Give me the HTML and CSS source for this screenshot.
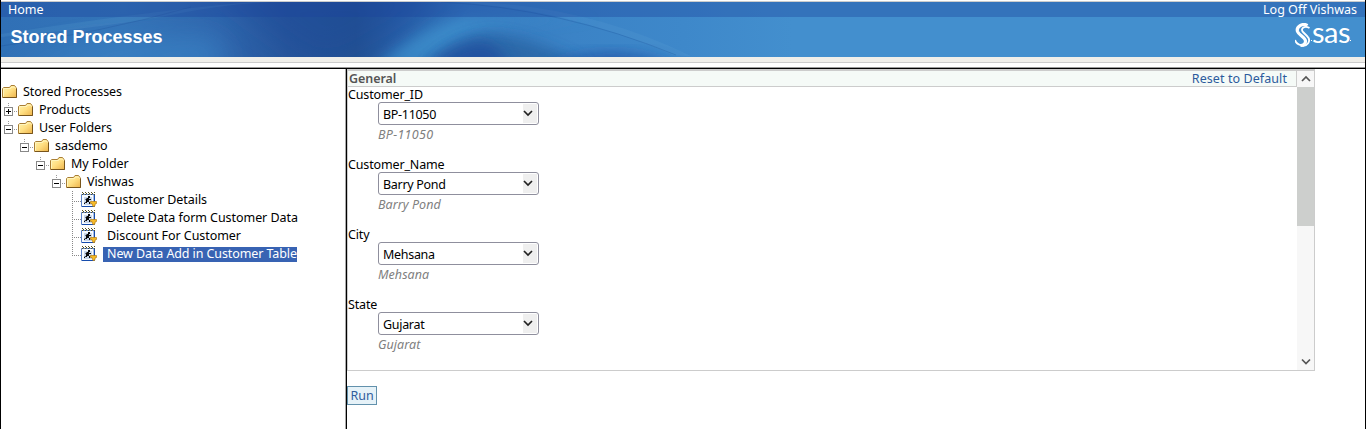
FILE: index.html
```html
<!DOCTYPE html>
<html lang="en">
<head>
<meta charset="utf-8">
<title>Stored Processes</title>
<link rel="stylesheet" href="styles.css">
</head>
<body>
<svg class="defs" width="0" height="0" aria-hidden="true">
  <defs>
    <linearGradient id="gold" x1="0" y1="0" x2="1" y2="1"><stop offset="0" stop-color="#fff5b0"/><stop offset=".5" stop-color="#ffdf83"/><stop offset="1" stop-color="#edb34a"/></linearGradient>
    <symbol id="folder" viewBox="0 0 16 14"><path d="M.5 12.500V3.500L2 2.500h5.500L9 .5h3.500l1.500 2 .5 1v9h-14z" fill="url(#gold)" stroke="#a87d35"/><path d="M1.500 11.500v-8h7l1-1.500h3l1 1.500" fill="none" stroke="#fff5bd"/><path d="M1 12.500h13.500V3.500" fill="none" stroke="#78551c"/></symbol>
    <symbol id="process" viewBox="0 0 16 16"><path d="M.5 2.500h12.500v12H.5z" fill="#f8fcff" stroke="#5a81c8"/><path d="M1 14.500h12.500V2" fill="none" stroke="#164cac"/><path d="M3 5h8v8H3z" fill="#c9d7eb"/><path d="M1 .5h1m2 0h1m2 0h1m2 0h1m2 0h1M2 1.500h1m2 0h1m2 0h1m2 0h1M1 2.500h1m2 0h1m2 0h1m2 0h1m2 0h1" stroke="#55501d"/><path d="M7 4h2v2H7zM5 7l1-1h2v1h2v1H8v2h1v2H8v-2H6v1H4v1H3v-1l2-1V8H4z" fill="#080808"/><path d="M9.500 9.500h6v2h-1l-1 3h-1.500l-1-3h-1.500z" fill="#f6bb27" stroke="#b67b10" stroke-width=".7"/></symbol>
  </defs>
</svg>
<div class="page">
  <header class="banner">
    <svg class="art" viewBox="0 0 1364 55" preserveAspectRatio="none" aria-hidden="true">
      <defs>
        <linearGradient id="sky"><stop offset="0" stop-color="#3070b6"/><stop offset=".09" stop-color="#3474b8"/><stop offset=".16" stop-color="#2f66ad"/><stop offset=".21" stop-color="#27569c"/><stop offset=".26" stop-color="#235292"/><stop offset=".29" stop-color="#285fa8"/><stop offset=".34" stop-color="#3578be"/><stop offset=".42" stop-color="#3b83c6"/><stop offset=".5" stop-color="#3e88ca"/><stop offset=".58" stop-color="#438fce"/><stop offset="1" stop-color="#438fce"/></linearGradient>
        <filter id="soft" x="-50%" y="-100%" width="200%" height="300%"><feGaussianBlur stdDeviation="14"/></filter>
        <filter id="fine" x="-20%" y="-60%" width="140%" height="220%"><feGaussianBlur stdDeviation="7"/></filter>
      </defs>
      <path d="M0 0h1364v55H0z" fill="url(#sky)"/>
      <path d="M200-20h255L400 25 340 60h-30z" fill="#1f4898" opacity=".45" filter="url(#soft)"/>
      <path d="M0 65L90 45 210 38l20 27z" fill="#3d8acb" opacity=".7" filter="url(#soft)"/>
      <path d="M375 65q50-45 90-48h135q-100 2-135 14l-50 34z" fill="#3f95d0" opacity=".7" filter="url(#fine)"/>
      <path d="M425 66q25-27 60-33 40-2 105 33z" fill="#28609f" opacity=".7" filter="url(#fine)"/>
      <path d="M430 66q20-22 50-26 20 4 30 26z" fill="#1f459b" opacity=".6" filter="url(#fine)"/>
      <path d="M540 66q70-30 140 0z" fill="#1c4ea1" opacity=".75" filter="url(#fine)"/>
      <path d="M0 35Q110 25 180 11T320 0h-70Q140 10 0 32z" fill="#75b6df" opacity=".13"/>
      <path d="M0 44Q100 31 190 5" fill="none" stroke="#17458d" stroke-opacity=".22"/>
      <path d="M450 0q115 6 222 53 5 1 18 1Q590 5 475 0z" fill="#67addb" opacity=".14"/>
      <path d="M440 0q120 6 235 53" fill="none" stroke="#195097" stroke-opacity=".28"/>
    </svg>
    <nav class="menu"><span>Home</span><span>Log Off Vishwas</span></nav>
    <div class="title"><h1>Stored Processes</h1>
      <div class="logo"><svg width="16" height="25" viewBox="0 0 16 25"><path d="M12.500 2.500C7.500-.5 1 4 2.500 8.500c1.500 4 8.500 6 8 10-.4 3-3 4-5 4" fill="none" stroke="#fff" stroke-width="3.200"/><path d="M14.500 5C9 2 5 6 8 9l4 4c5 5 0 11-6 9.500" fill="none" stroke="#fff" stroke-width="1.800"/><path d="M0 17q2 5 7 5" fill="none" stroke="#fff" stroke-width="1.900"/></svg><i></i><span>sas</span><i></i></div>
    </div>
  </header>
  <div class="rule"></div>
  <main>
    <aside class="tree">
      <div class="row l0"><svg class="fold"><use href="#folder"/></svg><span>Stored Processes</span></div>
      <div class="row l1"><b class="toggle plus"></b><svg class="fold"><use href="#folder"/></svg><span>Products</span></div>
      <div class="row l1"><b class="toggle"></b><svg class="fold"><use href="#folder"/></svg><span>User Folders</span></div>
      <div class="row l2"><b class="toggle"></b><svg class="fold"><use href="#folder"/></svg><span>sasdemo</span></div>
      <div class="row l3"><b class="toggle"></b><svg class="fold"><use href="#folder"/></svg><span>My Folder</span></div>
      <div class="row l4"><b class="toggle"></b><svg class="fold"><use href="#folder"/></svg><span>Vishwas</span></div>
      <div class="row leaf"><b class="branch"></b><svg class="proc"><use href="#process"/></svg><span>Customer Details</span></div>
      <div class="row leaf"><b class="branch"></b><svg class="proc"><use href="#process"/></svg><span>Delete Data form Customer Data</span></div>
      <div class="row leaf"><b class="branch"></b><svg class="proc"><use href="#process"/></svg><span>Discount For Customer</span></div>
      <div class="row leaf"><b class="branch last"></b><svg class="proc"><use href="#process"/></svg><span class="selected">New Data Add in Customer Table</span></div>
    </aside>
    <section class="content">
      <div class="panel">
        <div class="form">
          <div class="heading"><strong>General</strong><span>Reset to Default</span></div>
          <div class="field"><label>Customer_ID</label><div class="select"><span>BP-11050</span><b><svg width="10" height="7"><path d="M1 1l4 4 4-4"/></svg></b></div><em class="wide">BP−11050</em></div>
          <div class="field"><label>Customer_Name</label><div class="select"><span>Barry Pond</span><b><svg width="10" height="7"><path d="M1 1l4 4 4-4"/></svg></b></div><em>Barry Pond</em></div>
          <div class="field"><label>City</label><div class="select"><span>Mehsana</span><b><svg width="10" height="7"><path d="M1 1l4 4 4-4"/></svg></b></div><em>Mehsana</em></div>
          <div class="field"><label>State</label><div class="select"><span>Gujarat</span><b><svg width="10" height="7"><path d="M1 1l4 4 4-4"/></svg></b></div><em>Gujarat</em></div>
        </div>
        <div class="scroll"><svg width="17" height="16"><path d="M5 10l4-4 4 4"/></svg><i></i><svg class="down" width="17" height="17"><path d="M5 6.500l4 4 4-4"/></svg></div>
      </div>
      <button>Run</button>
    </section>
  </main>
</div>
</body>
</html>
```

FILE: styles.css
```css
* { box-sizing: border-box; }
body { margin: 0; background: #fff; font: 12.5px/18px "Noto Sans", sans-serif; color: #000; }
.defs { position: absolute; }
.page { height: 429px; border: solid #000; border-width: 0 1px; display: flex; flex-direction: column; overflow: hidden; }
.banner { height: 57px; border-top: 1px solid #fff; box-shadow: inset 0 1px #ccc; padding-top: 1px; position: relative; flex: none; }
.art { position: absolute; left: 0; top: 1px; width: 100%; height: 55px; }
.menu, .title { position: relative; display: flex; justify-content: space-between; color: #fff; }
.menu { height: 15px; line-height: 16px; padding: 0 8px 0 7px; background: rgba(28,66,154,.36); }
.title { height: 40px; padding: 0 14px 0 9.5px; }
h1 { margin: 0; font: bold 18px/41px "Liberation Sans", sans-serif; }
.logo { display: flex; height: 34px; padding-top: 6px; align-items: flex-start; font: 29px/18px Lato, sans-serif; letter-spacing: -.5px; }
.logo i { width: 1px; height: 1px; background: #fff; margin-top: 17px; }
.rule { flex: none; height: 12px; background: linear-gradient(#f0efea 5px,#ccc 5px 6px,#fff 6px 10px,#999 10px 11px,#000 11px); }
main { flex: 1; min-height: 0; display: flex; }
.tree { width: 346px; border-right: 1px solid #000; box-shadow: inset -1px 0 #aaa; padding-top: 14px; letter-spacing: -.06px; }
.row { height: 18px; display: flex; align-items: center; white-space: nowrap; }
.row > span { margin-left: 5px; }
.fold { width: 16px; height: 14px; flex: none; margin-left: 1px; }
.proc { width: 16px; height: 16px; flex: none; }
.l1 { padding-left: 3px; } .l2 { padding-left: 19px; } .l3 { padding-left: 35px; } .l4 { padding-left: 51px; } .leaf { padding-left: 71px; }
.toggle { width: 13px; height: 18px; flex: none; background: linear-gradient(#000,#000) 2px 10px/5px 1px no-repeat, linear-gradient(#888,#888) 0 6px/9px 1px no-repeat, linear-gradient(#888,#888) 0 14px/9px 1px no-repeat, linear-gradient(#888,#888) 0 6px/1px 9px no-repeat, linear-gradient(#888,#888) 8px 6px/1px 9px no-repeat, linear-gradient(#999,#999) 10px 10px/1px 1px no-repeat, linear-gradient(#999,#999) 12px 10px/1px 1px no-repeat, linear-gradient(#999,#999) 4px 2px/1px 1px no-repeat, linear-gradient(#999,#999) 4px 4px/1px 1px no-repeat; position: relative; }
.plus::after { content: ""; position: absolute; left: 4px; top: 8px; width: 1px; height: 5px; background: #000; }
.branch { width: 9px; height: 18px; flex: none; background: repeating-linear-gradient(#888 0 1px,transparent 1px 2px) 0 0/1px 18px no-repeat, repeating-linear-gradient(90deg,#888 0 1px,transparent 1px 2px) 0 10px/9px 1px no-repeat; }
.last { background-size: 1px 11px,9px 1px; }
.leaf > span { margin-left: 6px; padding-left: 4px; }
.leaf > .selected { background: #3863b3; color: #fff; line-height: 14px; height: 15px; margin-top: 1px; letter-spacing: -.1px; }
.content { flex: 1; min-width: 0; }
.panel { width: 968px; height: 302px; border: 1px solid #ccc; border-top-width: 2px; display: flex; }
.form { flex: 1; overflow: hidden; letter-spacing: -.05px; }
.heading { height: 16px; line-height: 15px; background: #f5faf7; border: solid #ccc; border-width: 0 1px 1px 0; display: flex; justify-content: space-between; padding: 0 9px 0 1px; color: #555; }
.heading strong { font-weight: 600; }
.heading span { color: #2c5b9c; letter-spacing: .08px; }
.field { height: 70px; display: flex; flex-direction: column; }
.field label { height: 15px; line-height: 15px; letter-spacing: -.15px; }
.select { width: 161px; height: 23px; margin-left: 30px; border: 1px solid #8f8f9d; border-radius: 3px; padding: 1px 1px 1px 4px; display: flex; justify-content: space-between; line-height: 21px; letter-spacing: -.3px; }
.select b { width: 14px; background: #efefef; display: flex; align-items: center; }
.select path, .scroll path { fill: none; stroke: #222; stroke-width: 1.7; }
.field em { margin-left: 30px; line-height: 18px; color: #808080; padding-top: 1px; letter-spacing: .05px; }
.field .wide { letter-spacing: .3px; }
.scroll { width: 17px; background: #f7f7f7; display: flex; flex-direction: column; }
.scroll svg { flex: none; }
.scroll path { stroke: #555; }
.scroll i { height: 139px; background: #cdcfcd; }
.scroll .down { margin-top: auto; }
button { display: block; margin-top: 15px; width: 30px; height: 19px; padding: 0; border: 1px solid #6291ac; background: #e6f2f8; color: #315d9c; font: 12.5px/16px "Noto Sans", sans-serif; }
```
